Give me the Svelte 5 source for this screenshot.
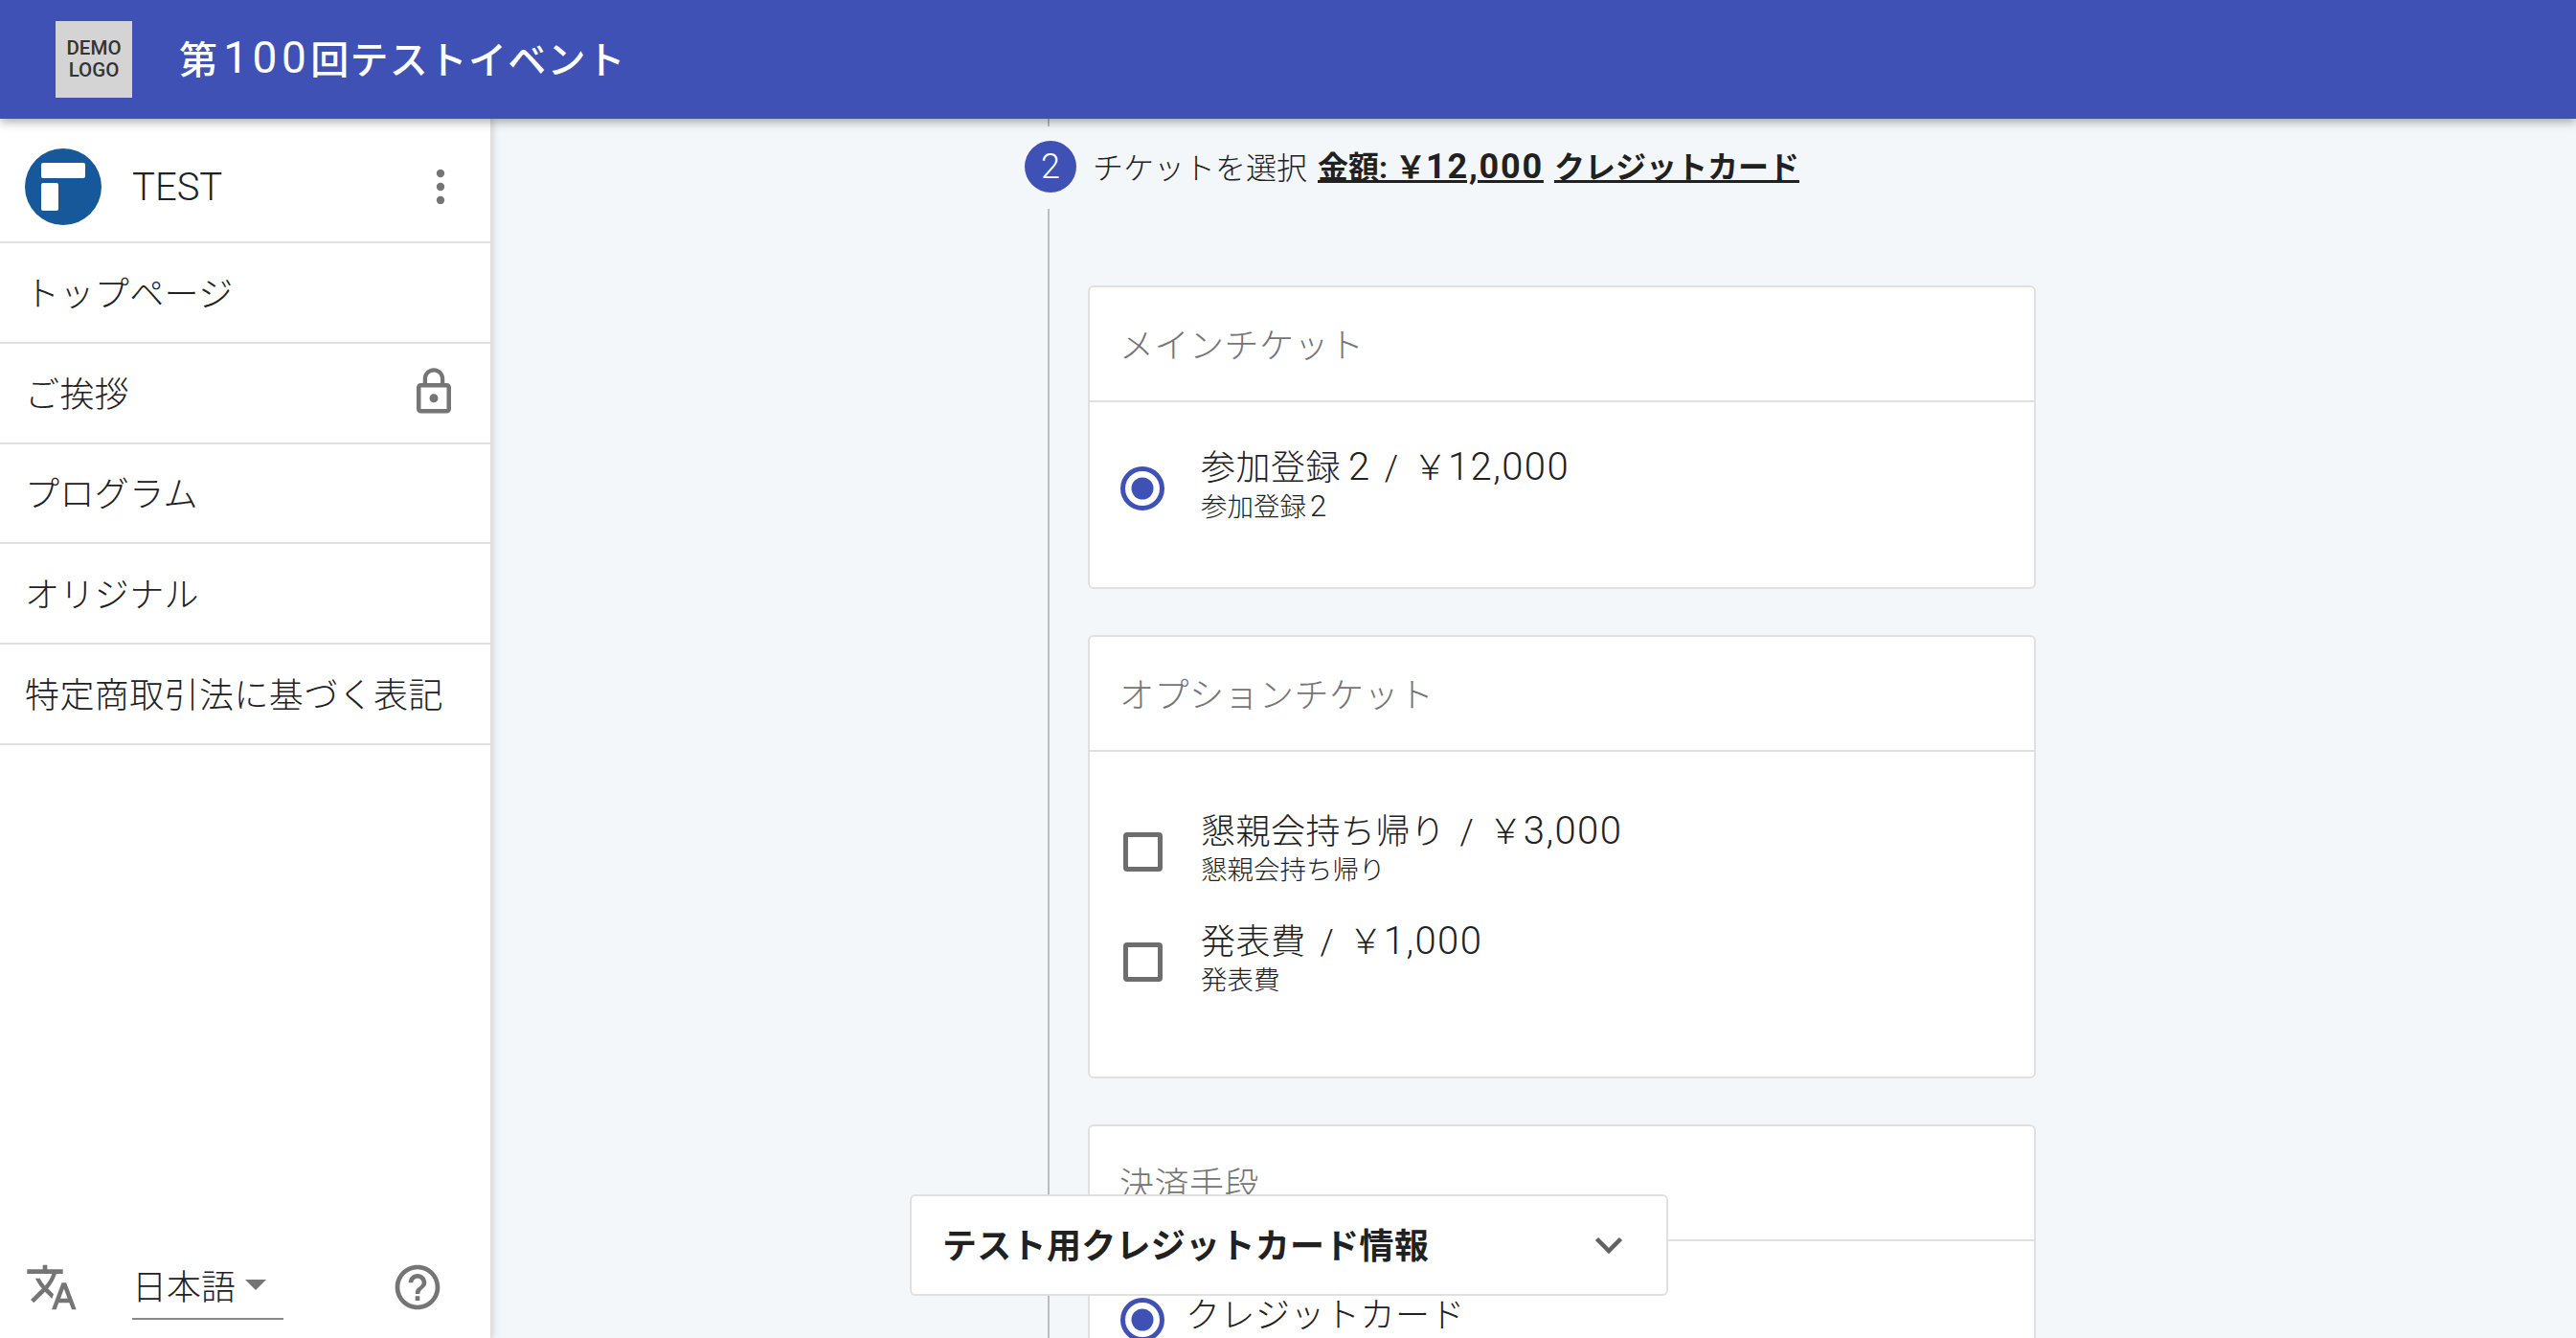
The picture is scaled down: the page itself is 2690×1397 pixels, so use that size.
<script>
  const nav = [
    { label: 'トップページ' },
    { label: 'ご挨拶', locked: true },
    { label: 'プログラム' },
    { label: 'オリジナル' },
    { label: '特定商取引法に基づく表記' }
  ];
  const cards = [
    { title: 'メインチケット', kind: 'radio', cls: 'main', items: [{ label: '参加登録', num: '2', price: '12,000', sub: '参加登録' }] },
    { title: 'オプションチケット', kind: 'check', cls: 'option', items: [
      { label: '懇親会持ち帰り', price: '3,000', sub: '懇親会持ち帰り' },
      { label: '発表費', price: '1,000', sub: '発表費' }
    ] }
  ];
</script>

<div class="page">
  <header class="topbar">
    <div class="logo"><span>DEMO</span><span>LOGO</span></div>
    <h1>第<span class="digits">100</span>回テストイベント</h1>
  </header>

  <div class="body">
    <aside class="sidebar">
      <div class="user">
        <svg class="avatar" viewBox="0 0 80 80">
          <circle cx="40" cy="40" r="40" fill="#17589b" />
          <rect x="17" y="15" width="46" height="16" rx="2" fill="#fff" />
          <rect x="17" y="36" width="18" height="29" rx="2" fill="#fff" />
        </svg>
        <span class="username">TEST</span>
        <svg class="dots" viewBox="0 0 10 36">
          <circle cx="5" cy="4" r="4.2" /><circle cx="5" cy="18" r="4.2" /><circle cx="5" cy="32" r="4.2" />
        </svg>
      </div>
      <nav>
        {#each nav as item}
          <div class="nav-item">
            <span>{item.label}</span>
            {#if item.locked}
              <svg class="lock" viewBox="0 0 24 24"><path d="M12 17c1.1 0 2-.9 2-2s-.9-2-2-2-2 .9-2 2 .9 2 2 2zm6-9h-1V6c0-2.76-2.24-5-5-5S7 3.24 7 6v2H6c-1.1 0-2 .9-2 2v10c0 1.1.9 2 2 2h12c1.1 0 2-.9 2-2V10c0-1.1-.9-2-2-2zM8.9 6c0-1.71 1.39-3.1 3.1-3.1s3.1 1.39 3.1 3.1v2H8.9V6zM18 20H6V10h12v10z" /></svg>
            {/if}
          </div>
        {/each}
      </nav>
      <div class="side-foot">
        <svg class="translate" viewBox="0 0 24 24"><path d="M12.87 15.07l-2.54-2.51.03-.03c1.74-1.94 2.98-4.17 3.71-6.53H17V4h-7V2H8v2H1v1.99h11.17C11.5 7.92 10.44 9.75 9 11.35 8.07 10.32 7.3 9.19 6.69 8h-2c.73 1.63 1.73 3.17 2.98 4.56l-5.09 5.02L4 19l5-5 3.11 3.11.76-2.04zM18.5 10h-2L12 22h2l1.12-3h4.75L21 22h2l-4.5-12zm-2.62 7l1.62-4.33L19.12 17h-3.24z" /></svg>
        <div class="lang"><span>日本語</span><i class="caret"></i></div>
        <svg class="help" viewBox="0 0 24 24"><path d="M11 18h2v-2h-2v2zm1-16C6.48 2 2 6.48 2 12s4.48 10 10 10 10-4.48 10-10S17.52 2 12 2zm0 18c-4.41 0-8-3.59-8-8s3.59-8 8-8 8 3.59 8 8-3.59 8-8 8zm0-14c-2.21 0-4 1.79-4 4h2c0-1.1.9-2 2-2s2 .9 2 2c0 2-3 1.75-3 5h2c0-2.25 3-2.5 3-5 0-2.21-1.79-4-4-4z" /></svg>
      </div>
    </aside>

    <main class="content">
      <div class="stub"></div>
      <div class="step-head">
        <span class="step-num">2</span>
        <span class="step-label">チケットを選択</span>
        <b>金額: ￥<span class="amount">12,000</span></b>
        <b>クレジットカード</b>
      </div>
      <div class="step-body">
        {#each cards as card}
          <section class="card {card.cls}">
            <div class="card-title">{card.title}</div>
            <div class="card-body">
              {#each card.items as it}
                <div class="choice">
                  {#if card.kind === 'radio'}
                    <svg class="ctl radio" viewBox="0 0 46 46"><circle cx="23" cy="23" r="20.5" /><circle class="dot" cx="23" cy="23" r="11.5" /></svg>
                  {:else}
                    <span class="ctl box"></span>
                  {/if}
                  <div>
                    <div class="name">{it.label}{#if it.num}<span class="num">{it.num}</span>{/if}<span class="sep">/</span>￥<span class="price">{it.price}</span></div>
                    <div class="sub">{it.sub}{#if it.num}<span class="subnum">{it.num}</span>{/if}</div>
                  </div>
                </div>
              {/each}
            </div>
          </section>
        {/each}
        <section class="card pay">
          <div class="card-title">決済手段</div>
          <div class="card-body">
            <div class="choice">
              <svg class="ctl radio" viewBox="0 0 46 46"><circle cx="23" cy="23" r="20.5" /><circle class="dot" cx="23" cy="23" r="11.5" /></svg>
              <div class="name">クレジットカード</div>
            </div>
          </div>
        </section>
      </div>

      <div class="float-card">
        <strong>テスト用クレジットカード情報</strong>
        <svg class="chev" viewBox="0 0 30 18"><polyline points="2.5,2.5 15,15 27.5,2.5" /></svg>
      </div>
    </main>
  </div>
</div>

<style>
  :global(body) { margin: 0; }
  .page {
    width: 2690px; height: 1397px; overflow: hidden; display: flex; flex-direction: column;
    font-family: Roboto, "Noto Sans CJK JP", sans-serif; font-weight: 300; color: #212121;
    background: #f4f7fa;
  }
  .topbar {
    height: 124px; flex: none; background: #3f51b5; display: flex; align-items: center;
    padding-left: 58px; box-sizing: border-box; position: relative; z-index: 3;
    box-shadow: 0 3px 10px rgba(0,0,0,.35);
  }
  .logo {
    width: 80px; height: 80px; background: #d4d4d4; color: #333; display: flex; flex-direction: column;
    align-items: center; justify-content: center; font: 500 20.5px/23px Roboto, sans-serif;
  }
  h1 { margin: -4px 0 0 49px; font-size: 40px; font-weight: 500; color: #fff; display: flex; align-items: center; letter-spacing: 1.2px; }
  .digits { font-size: 46px; letter-spacing: 4.5px; margin-left: 5px; font-weight: 400; }
  .body { flex: 1; display: flex; min-height: 0; }
  .sidebar {
    width: 514px; flex: none; background: #fff; display: flex; flex-direction: column; box-sizing: border-box;
    border-right: 2px solid #e0e0e0; box-shadow: 2px 0 6px rgba(0,0,0,.12); position: relative; z-index: 2;
  }
  .user { height: 130px; flex: none; display: flex; align-items: center; padding: 14px 47px 0 26px; box-sizing: border-box; border-bottom: 2px solid #e0e0e0; }
  .avatar { width: 80px; height: 80px; flex: none; }
  .username { margin-left: 32px; font-size: 40px; flex: 1; }
  .dots { width: 10px; height: 36px; fill: #757575; }
  .nav-item {
    height: 104.8px; box-sizing: border-box; border-bottom: 2px solid #e0e0e0; display: flex; align-items: center;
    justify-content: space-between; padding: 0 36px 3px 26px; font-size: 36px; letter-spacing: .4px;
  }
  .lock { width: 54px; height: 54px; fill: #757575; margin-right: -4px; }
  .side-foot { margin-top: auto; height: 100px; position: relative; display: flex; align-items: center; padding: 0 0 6px 26px; box-sizing: border-box; }
  .translate { width: 56px; height: 56px; fill: #757575; flex: none; }
  .lang {
    margin: 6px 0 0 56px; width: 158px; height: 62px; box-sizing: border-box; border-bottom: 2px solid #8a8a8a;
    display: flex; align-items: center; font-size: 36px; gap: 10px; padding: 0 0 10px 0;
  }
  .caret { width: 0; height: 0; border: 11px solid transparent; border-top: 11px solid #757575; border-bottom: 0; }
  .help { width: 56px; height: 56px; fill: #757575; margin-left: 112px; flex: none; }

  .content { flex: 1; position: relative; min-width: 0; padding-left: 580px; }
  .stub { width: 2px; height: 8px; background: #bdbdbd; }
  .step-head { height: 54px; margin: 15px 0 0 -24px; display: flex; align-items: center; font-size: 32px; position: relative; }
  .step-num {
    width: 54px; height: 54px; border-radius: 50%; background: #3f51b5; color: #fff; display: flex; align-items: center;
    justify-content: center; font-size: 36px; margin-right: 17px; flex: none;
  }
  .step-label { margin-top: -3px; }
  .step-head b { font-weight: 700; text-decoration: underline; margin: -5px 0 0 11px; }
  .amount { font-size: 36px; letter-spacing: 1.8px; }
  .step-body {
    margin-top: 17px; border-left: 2px solid #bdbdbd; padding: 80px 0 0 40px; width: 992px;
    display: flex; flex-direction: column; gap: 48px;
  }
  .card { background: #fff; border: 2px solid #e0e0e0; border-radius: 6px; box-sizing: border-box; width: 990px; flex: none; }
  .main { height: 317px; }
  .option { height: 463px; }
  .pay { height: 400px; }
  .card-title {
    height: 120px; box-sizing: border-box; border-bottom: 2px solid #e0e0e0; display: flex; align-items: center;
    padding: 0 0 3px 31px; font-size: 36px; letter-spacing: .5px; color: #757575;
  }
  .card-body { padding: 45px 32px 0; display: flex; flex-direction: column; gap: 34px; }
  .option .card-body { padding-top: 60px; }
  .pay .card-body { padding-top: 51px; }
  .choice { display: flex; align-items: center; gap: 38px; }
  .pay .choice { gap: 22px; }
  .ctl { width: 46px; height: 46px; flex: none; margin-top: 8px; }
  .radio circle { fill: none; stroke: #3f51b5; stroke-width: 5; }
  .radio .dot { fill: #3f51b5; stroke: none; }
  .box { width: 41px; height: 41px; margin: 8px 2px 0 3px; border: 5px solid #6e6e6e; border-radius: 4px; box-sizing: border-box; }
  .name { font-size: 36px; line-height: 46px; display: flex; align-items: baseline; letter-spacing: .5px; }
  .num { font-size: 40px; margin-left: 8px; }
  .sep { margin: 0 15px; }
  .price { font-size: 40px; letter-spacing: 1.4px; }
  .sub { font-size: 27.5px; line-height: 34px; }
  .subnum { font-size: 31px; margin-left: 4px; }
  .float-card {
    position: absolute; left: 436px; top: 1123px; width: 792px; height: 106px; box-sizing: border-box; background: #fff;
    border: 2px solid #e0e0e0; border-radius: 6px; display: flex; align-items: center; justify-content: space-between;
    padding: 0 45px 0 32px; z-index: 2;
  }
  .float-card strong { font-size: 36px; font-weight: 700; letter-spacing: .3px; margin-top: -5px; }
  .chev { width: 30px; height: 18px; fill: none; stroke: #616161; stroke-width: 4.5; }
</style>
